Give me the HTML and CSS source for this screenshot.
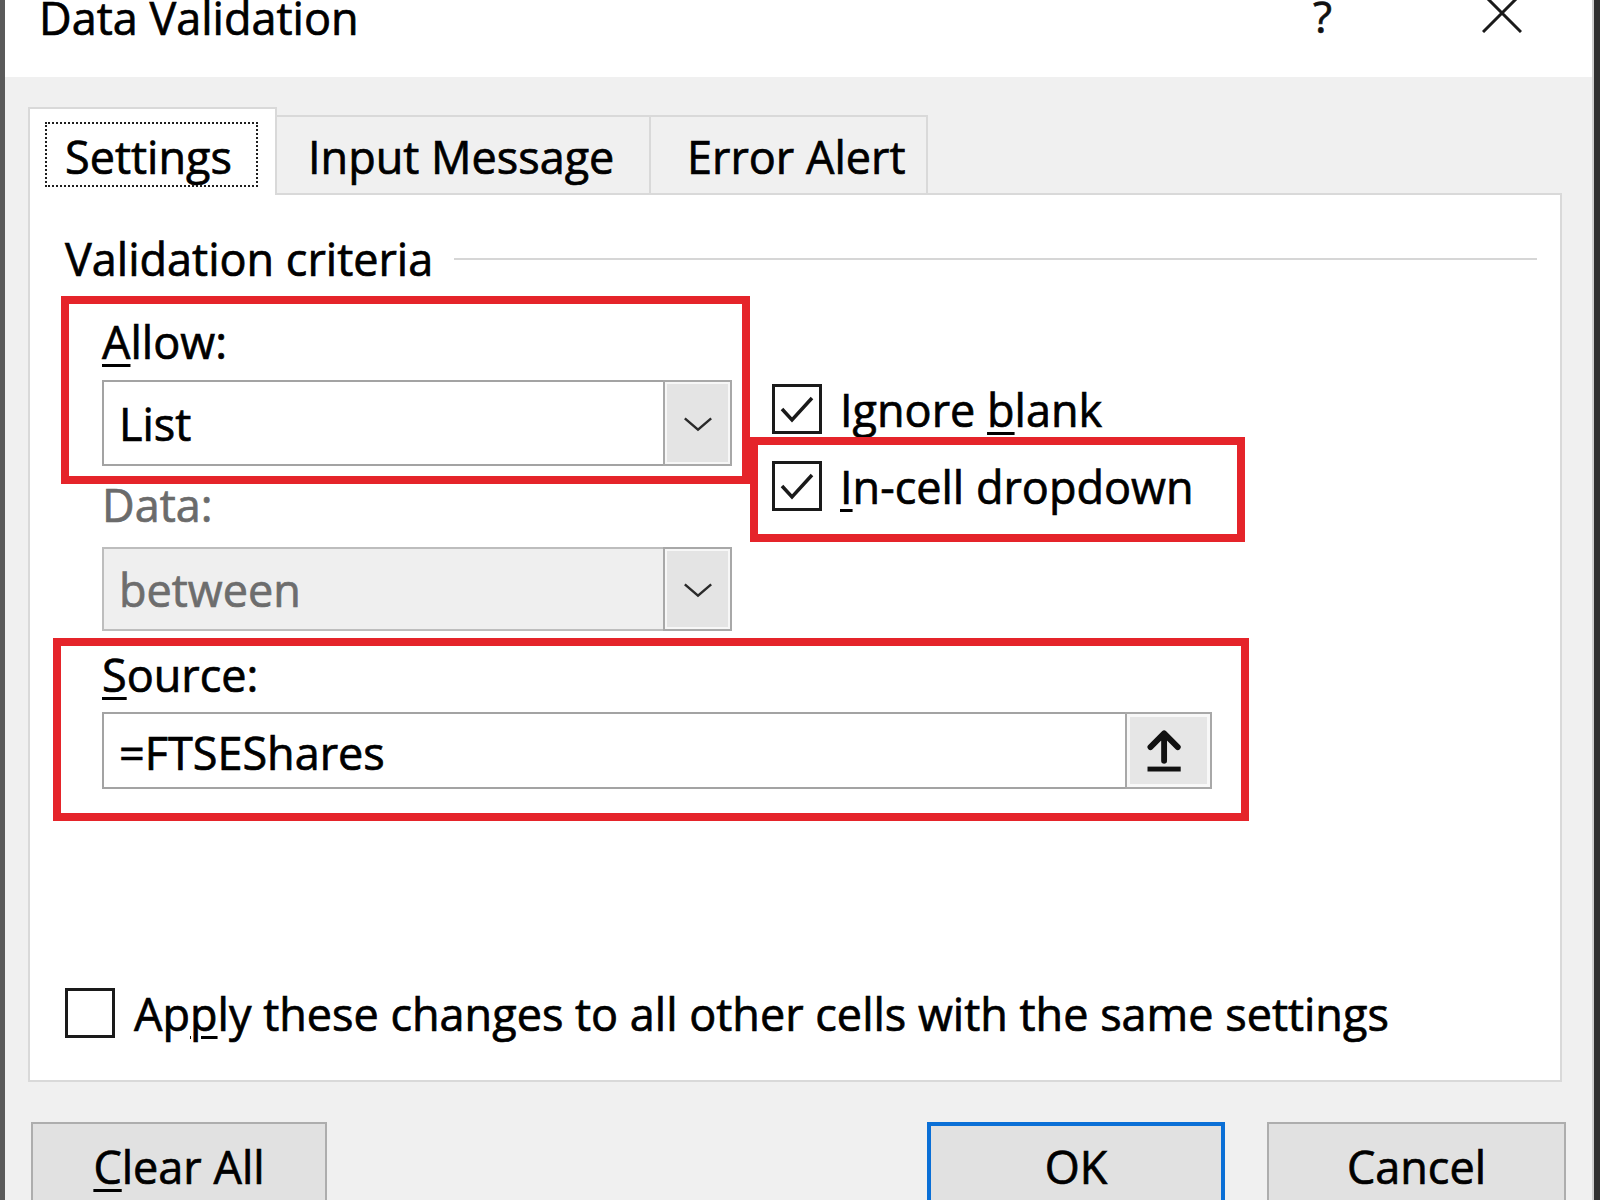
FILE: index.html
```html
<!DOCTYPE html>
<html lang="en">
<head>
<meta charset="utf-8">
<title>Data Validation</title>
<link rel="stylesheet" href="styles.css">
</head>
<body>
<div class="window">
  <header class="titlebar">
    <div class="title">Data Validation</div>
    <div class="controls">
      <span class="help">?</span>
      <svg class="close" viewBox="0 0 40 40" aria-hidden="true"><path d="M1 1L39 39M39 1L1 39"/></svg>
    </div>
  </header>

  <nav class="tabs">
    <div class="tab active"><span class="focus">Settings</span></div>
    <div class="tab t2">Input Message</div>
    <div class="tab t3">Error Alert</div>
  </nav>

  <section class="panel">
    <div class="group-head"><span>Validation criteria</span><span class="rule"></span></div>

    <div class="criteria">
      <div class="col-left">
        <div class="lbl"><u>A</u>llow:</div>
        <div class="combo">
          <span class="val">List</span>
          <span class="drop"><svg viewBox="0 0 34 17" aria-hidden="true"><path d="M3 3L17 15L31 3"/></svg></span>
        </div>
        <div class="lbl dim data-lbl">Data:</div>
        <div class="combo disabled">
          <span class="val">between</span>
          <span class="drop"><svg viewBox="0 0 34 17" aria-hidden="true"><path d="M3 3L17 15L31 3"/></svg></span>
        </div>
      </div>
      <div class="col-right">
        <div class="check-row">
          <span class="cb"><svg viewBox="0 0 44 44" aria-hidden="true"><path d="M7 22L17 33L37 11"/></svg></span>
          <span>Ignore <u>b</u>lank</span>
        </div>
        <div class="check-row">
          <span class="cb"><svg viewBox="0 0 44 44" aria-hidden="true"><path d="M7 22L17 33L37 11"/></svg></span>
          <span><u>I</u>n-cell dropdown</span>
        </div>
      </div>
    </div>

    <div class="source">
      <div class="lbl"><u>S</u>ource:</div>
      <div class="input">
        <span class="val">=FTSEShares</span>
        <span class="pick"><svg viewBox="0 0 85 77" aria-hidden="true"><path class="arr" d="M24 35L38 21L52 35M38 22V49"/><rect x="21" y="55" width="34" height="5"/></svg></span>
      </div>
    </div>

    <div class="apply-row">
      <span class="cb"></span>
      <span>Ap<u>p</u>ly these changes to all other cells with the same settings</span>
    </div>

    <div class="mark mark-allow"></div>
    <div class="mark mark-incell"></div>
    <div class="mark mark-source"></div>
  </section>

  <footer class="buttons">
    <button class="btn clear"><u>C</u>lear All</button>
    <button class="btn ok">OK</button>
    <button class="btn cancel">Cancel</button>
  </footer>
</div>
</body>
</html>
```
FILE: styles.css
```css
* { box-sizing: border-box; margin: 0; padding: 0; }

html, body { width: 1600px; height: 1200px; overflow: hidden; }

body {
  background: #2f2f2f;
  font-family: "Open Sans", "Noto Sans", "DejaVu Sans", sans-serif;
  font-size: 45px;
  line-height: 45px;
  color: #000;
  -webkit-text-stroke: 0.7px currentColor;
}

u { text-decoration-thickness: 3px; text-underline-offset: 5px; }

.window {
  width: 1594px;
  height: 1200px;
  background: #f0f0f0;
  border-left: 5px solid #5a5a5a;
  border-right: 2px solid #cdcdcd;
  overflow: hidden;
  display: flex;
  flex-direction: column;
}

/* title bar */
.titlebar {
  flex: none;
  height: 77px;
  background: #fff;
  display: flex;
  align-items: flex-start;
  padding: 0 70px 0 34px;
}
.title { margin-top: -5px; white-space: nowrap; }
.controls { margin-left: auto; display: flex; align-items: flex-start; }
.help { margin-top: -6px; font-size: 44px; color: #111; }
.close {
  width: 40px; height: 40px;
  margin-top: -7px; margin-left: 150px;
  fill: none; stroke: #1a1a1a; stroke-width: 3;
}

/* tabs */
.tabs {
  flex: none;
  height: 116px;
  display: flex;
  align-items: flex-end;
  padding-left: 23px;
  position: relative;
  z-index: 1;
}
.tab {
  height: 78px;
  border-top: 2px solid #d9d9d9;
  border-right: 2px solid #d9d9d9;
  padding-top: 17px;
  white-space: nowrap;
}
.tab.active {
  width: 249px;
  height: 88px;
  margin-bottom: -2px;
  background: #fff;
  border-left: 2px solid #d9d9d9;
  padding: 13px 0 0 15px;
}
.focus {
  display: block;
  width: 213px;
  height: 65px;
  border: 2px dotted #1e1e1e;
  padding: 10px 0 0 18px;
}
.t2 { width: 374px; padding-left: 31px; }
.t3 { width: 277px; padding-left: 36px; }

/* panel */
.panel {
  flex: none;
  position: relative;
  width: 1534px;
  height: 889px;
  margin-left: 23px;
  background: #fff;
  border: 2px solid #d9d9d9;
  display: flex;
  flex-direction: column;
}

.group-head {
  display: flex;
  align-items: center;
  margin-top: 41px;
  padding: 0 23px 0 35px;
  white-space: nowrap;
}
.rule { flex: 1; height: 2px; background: #d6d6d6; margin-left: 21px; }

.criteria { display: flex; margin-top: 38px; padding-left: 72px; }
.col-left { width: 630px; flex: none; }
.lbl { height: 45px; white-space: nowrap; }
.dim { color: #6b6b6b; }
.data-lbl { margin-top: 16px; }

.combo {
  display: flex;
  height: 86px;
  margin-top: 16px;
  border: 2px solid #a3a3a3;
  background: #fff;
}
.combo.disabled {
  height: 84px;
  margin-top: 20px;
  background: #efefef;
  border-color: #bdbdbd;
  color: #6d6d6d;
}
.val { flex: 1; align-self: center; padding-left: 15px; white-space: nowrap; }
.drop {
  width: 69px;
  margin: -2px -2px -2px 0;
  background: #e4e4e4;
  border: 2px solid #a8a8a8;
  box-shadow: inset 0 0 0 2px #f7f7f7;
  display: flex;
  align-items: center;
  justify-content: center;
}
.drop svg { width: 32px; height: 17px; fill: none; stroke: #2a2a2a; stroke-width: 2.6; }

.col-right {
  margin-left: 40px;
  padding-top: 65px;
  display: flex;
  flex-direction: column;
  gap: 27px;
}
.check-row { display: flex; align-items: center; height: 50px; gap: 18px; white-space: nowrap; }

.cb {
  flex: none;
  width: 50px;
  height: 50px;
  border: 3px solid #1a1a1a;
  background: #fff;
  display: block;
}
.cb svg { display: block; width: 44px; height: 44px; fill: none; stroke: #1a1a1a; stroke-width: 3.5; }

.source { margin-top: 21px; padding-left: 72px; }
.input {
  display: flex;
  width: 1110px;
  height: 77px;
  margin-top: 15px;
  border: 2px solid #a3a3a3;
  background: #fff;
}
.input .val { padding-top: 4px; }
.pick {
  width: 87px;
  margin: -2px -2px -2px 0;
  background: #e6e6e6;
  border: 2px solid #a8a8a8;
  box-shadow: inset 0 0 0 3px #f8f8f8;
}
.pick svg { display: block; width: 83px; height: 77px; margin-top: -2px; }
.pick .arr { fill: none; stroke: #111; stroke-width: 6; stroke-linecap: round; stroke-linejoin: round; }
.pick rect { fill: #111; }

.apply-row {
  margin-top: auto;
  margin-bottom: 42px;
  padding-left: 35px;
  display: flex;
  align-items: center;
  gap: 19px;
  white-space: nowrap;
}

/* red annotation rectangles */
.mark { position: absolute; border: 8px solid #e5242a; pointer-events: none; }
.mark-allow { left: 31px; top: 101px; width: 689px; height: 188px; }
.mark-incell { left: 720px; top: 242px; width: 495px; height: 105px; }
.mark-source { left: 23px; top: 443px; width: 1196px; height: 183px; }

/* buttons */
.buttons {
  flex: none;
  display: flex;
  margin-top: 40px;
  padding: 0 26px;
}
.btn {
  height: 89px;
  font: inherit;
  color: #000;
  background: #e1e1e1;
  border: 2px solid #adadad;
}
.clear { width: 296px; }
.ok { width: 298px; margin-left: auto; border: 4px solid #0a6fd6; }
.cancel { width: 299px; margin-left: 42px; }
```
